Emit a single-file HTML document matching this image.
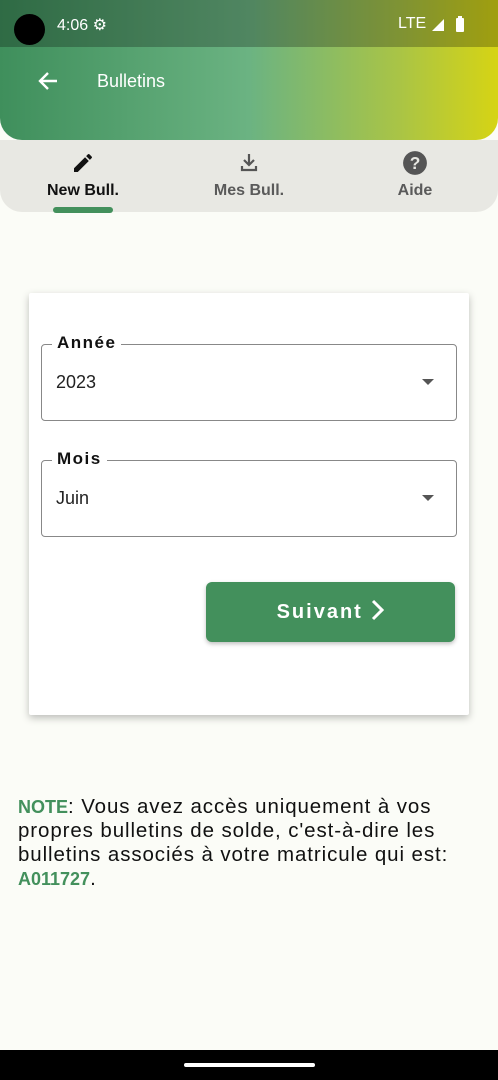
<!DOCTYPE html>
<html><head><meta charset="utf-8"><style>
*{margin:0;padding:0;box-sizing:border-box}
body{width:498px;height:1080px;background:#fbfcf7;font-family:"Liberation Sans",sans-serif;position:relative;overflow:hidden}
.top{position:absolute;left:0;top:0;width:498px;height:140px;border-radius:0 0 22px 22px;background:linear-gradient(90deg,#3f8f5c 0%,#6bb382 50%,#a9c446 80%,#d6d414 100%)}
.status{position:absolute;left:0;top:0;width:498px;height:47px;background:rgba(0,0,0,0.25)}
.tabs{position:absolute;left:0;top:140px;width:498px;height:72px;background:#e8e8e3;border-radius:0 0 22px 22px}
.tab{position:absolute;top:0;width:166px;text-align:center;font-size:16px;color:#555}
.card{position:absolute;left:29px;top:293px;width:440px;height:422px;background:#fff;box-shadow:0 3px 8px rgba(0,0,0,0.25);border-radius:2px}
.field{position:absolute;left:12px;width:416px;height:77px;border:1px solid #888;border-radius:4px}
.field .lbl{position:absolute;left:10px;top:-12px;background:#fff;padding:0 5px;font-weight:bold;font-size:17px;letter-spacing:1.5px;color:#111}
.field .val{position:absolute;left:14px;top:27px;font-size:18px;color:#222}
.field .arr{position:absolute;right:22px;top:34px;width:0;height:0;border-left:6px solid transparent;border-right:6px solid transparent;border-top:6px solid #555}
.btn{position:absolute;left:177px;top:289px;width:249px;height:60px;background:#43905c;border-radius:6px;box-shadow:0 2px 4px rgba(0,0,0,0.25);color:#fff;font-weight:bold;font-size:20px;letter-spacing:2px;text-align:center;line-height:60px}
.note{position:absolute;left:18px;top:795px;font-size:20.5px;line-height:24px;color:#111;white-space:nowrap;letter-spacing:0.9px}
.g{color:#43905c;font-weight:bold;font-size:18px;letter-spacing:0}
.nav{position:absolute;left:0;top:1050px;width:498px;height:30px;background:#000}
.nav div{position:absolute;left:184px;top:13px;width:131px;height:4px;border-radius:2px;background:#fff}
</style></head><body>
<div class="top"><div class="status"></div>
<div style="position:absolute;left:14px;top:14px;width:31px;height:31px;border-radius:50%;background:#000"></div>
<div style="position:absolute;left:57px;top:15px;color:#fff;font-size:16px">4:06 ⚙</div>
<div style="position:absolute;left:398px;top:15px;color:#fff;font-size:16px">LTE</div>
<svg style="position:absolute;left:430px;top:15px" width="40" height="18"><path d="M2 16 L14 4 L14 16Z" fill="#fff"/><rect x="26" y="3" width="8" height="14" rx="1" fill="#fff"/><rect x="28" y="1" width="4" height="3" fill="#fff"/></svg>
<svg style="position:absolute;left:37px;top:71px" width="22" height="20"><path d="M20 10H3M11 2L3 10L11 18" stroke="#fff" stroke-width="2.4" fill="none"/></svg>
<div style="position:absolute;left:97px;top:71px;color:#fff;font-size:18px">Bulletins</div>
</div>
<div class="tabs">
<div class="tab" style="left:0;color:#111;font-weight:bold">
<svg style="margin-top:11px" width="24" height="24" viewBox="0 0 24 24"><path d="M3 17.25V21h3.75L17.81 9.94l-3.75-3.75L3 17.25zM20.71 7.04a1 1 0 000-1.41l-2.34-2.34a1 1 0 00-1.41 0l-1.83 1.83 3.75 3.75 1.83-1.83z" fill="#111"/></svg><div style="margin-top:2px">New Bull.</div></div>
<div class="tab" style="left:166px;font-weight:bold;color:#5a5a5a">
<svg style="margin-top:11px" width="24" height="24" viewBox="0 0 24 24"><path d="M12 3v11M7 9l5 5 5-5M5 15v4h14v-4" stroke="#555" stroke-width="2.2" fill="none"/></svg><div style="margin-top:2px">Mes Bull.</div></div>
<div class="tab" style="left:332px;font-weight:bold;color:#5a5a5a">
<svg style="margin-top:10px" width="26" height="26" viewBox="0 0 24 24"><circle cx="12" cy="12" r="11" fill="#555"/><text x="12" y="17.5" text-anchor="middle" font-size="16" font-weight="bold" fill="#e8e8e3" font-family="Liberation Sans">?</text></svg><div style="margin-top:1px">Aide</div></div>
<div style="position:absolute;left:53px;top:67px;width:60px;height:6px;border-radius:3px;background:#43905c"></div>
</div>
<div class="card">
<div class="field" style="top:51px"><span class="lbl">Année</span><span class="val">2023</span><span class="arr"></span></div>
<div class="field" style="top:167px"><span class="lbl">Mois</span><span class="val">Juin</span><span class="arr"></span></div>
<div class="btn">Suivant <svg width="14" height="22" style="vertical-align:-3px" viewBox="0 0 14 22"><path d="M3 2L12 11L3 20" stroke="#fff" stroke-width="3" fill="none"/></svg></div>
</div>
<div class="note"><span class="g">NOTE</span>: Vous avez accès uniquement à vos<br>propres bulletins de solde, c'est-à-dire les<br>bulletins associés à votre matricule qui est:<br><span class="g">A011727</span>.</div>
<div class="nav"><div></div></div>
</body></html>
